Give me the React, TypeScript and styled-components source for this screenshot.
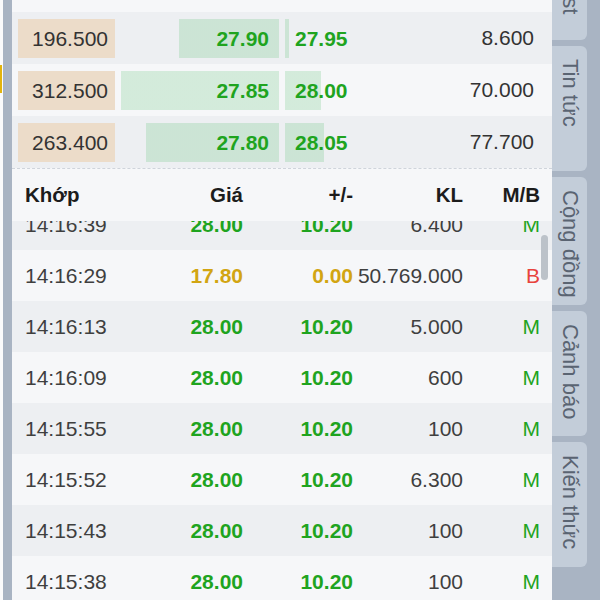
import styled, { createGlobalStyle } from 'styled-components'

const GlobalStyle = createGlobalStyle`
  html, body {
    margin: 0;
    padding: 0;
  }
  body {
    font-family: "Liberation Sans", Arial, sans-serif;
    background: #ffffff;
  }
`

type Tone = 'up' | 'ref' | 'down'

const toneColor: Record<Tone, string> = {
  up: '#1fa41f',
  ref: '#d2a512',
  down: '#e8433d',
}

const book = [
  { vol: '196.500', bid: '27.90', bidW: 100, ask: '27.95', askW: 4, askVol: '8.600' },
  { vol: '312.500', bid: '27.85', bidW: 158, ask: '28.00', askW: 36, askVol: '70.000' },
  { vol: '263.400', bid: '27.80', bidW: 133, ask: '28.05', askW: 39, askVol: '77.700' },
]

const trades: { time: string; price: string; change: string; kl: string; side: string; tone: Tone }[] = [
  { time: '14:16:39', price: '28.00', change: '10.20', kl: '6.400', side: 'M', tone: 'up' },
  { time: '14:16:29', price: '17.80', change: '0.00', kl: '50.769.000', side: 'B', tone: 'ref' },
  { time: '14:16:13', price: '28.00', change: '10.20', kl: '5.000', side: 'M', tone: 'up' },
  { time: '14:16:09', price: '28.00', change: '10.20', kl: '600', side: 'M', tone: 'up' },
  { time: '14:15:55', price: '28.00', change: '10.20', kl: '100', side: 'M', tone: 'up' },
  { time: '14:15:52', price: '28.00', change: '10.20', kl: '6.300', side: 'M', tone: 'up' },
  { time: '14:15:43', price: '28.00', change: '10.20', kl: '100', side: 'M', tone: 'up' },
  { time: '14:15:38', price: '28.00', change: '10.20', kl: '100', side: 'M', tone: 'up' },
]

// first tab is scrolled mostly out of view, only its tail shows
const tabs = [
  { label: 'Watchlist', h: 127, offset: -87 },
  { label: 'Tin tức', h: 125, offset: 0 },
  { label: 'Cộng đồng', h: 128, offset: 0 },
  { label: 'Cảnh báo', h: 125, offset: 0 },
  { label: 'Kiến thức', h: 125, offset: 0 },
]

export default function App() {
  return (
    <>
      <GlobalStyle />
      <Screen>
        <EdgeStrip>
          <EdgeMark />
        </EdgeStrip>
        <Gutter />
        <Panel>
          <Book>
            {book.map((r, i) => (
              <BookRow key={r.vol} $dark={i % 2 === 0}>
                <VolBox>{r.vol}</VolBox>
                <BidCell style={{ backgroundSize: `${r.bidW}px 100%` }}>{r.bid}</BidCell>
                <AskCell style={{ backgroundSize: `${r.askW}px 100%` }}>{r.ask}</AskCell>
                <AskVol>{r.askVol}</AskVol>
              </BookRow>
            ))}
          </Book>
          <HeadRow>
            <HeadCell $left>Khớp</HeadCell>
            <HeadCell>Giá</HeadCell>
            <HeadCell>+/-</HeadCell>
            <HeadCell>KL</HeadCell>
            <HeadCell>M/B</HeadCell>
          </HeadRow>
          <TradeList>
            <TradeScroll>
              {trades.map((t, i) => (
                <TradeRow key={t.time} $dark={i % 2 === 0}>
                  <TimeCell>{t.time}</TimeCell>
                  <PriceCell $tone={t.tone}>{t.price}</PriceCell>
                  <PriceCell $tone={t.tone}>{t.change}</PriceCell>
                  <VolCell>{t.kl}</VolCell>
                  <SideCell $tone={t.side === 'B' ? 'down' : 'up'}>{t.side}</SideCell>
                </TradeRow>
              ))}
            </TradeScroll>
            <ScrollThumb />
          </TradeList>
        </Panel>
        <TabColumn>
          {tabs.map(t => (
            <SideTab key={t.label} $h={t.h} $offset={t.offset}>{t.label}</SideTab>
          ))}
        </TabColumn>
      </Screen>
    </>
  )
}

const Screen = styled.div`
  width: 600px;
  height: 600px;
  overflow: hidden;
  display: flex;
`

const EdgeStrip = styled.div`
  width: 3px;
  flex-shrink: 0;
  background: #fbfbfc;
  padding-top: 65px;
  box-sizing: border-box;
`

const EdgeMark = styled.div`
  width: 2px;
  height: 28px;
  background: #e3b40c;
`

const Gutter = styled.div`
  width: 9px;
  flex-shrink: 0;
  background: #a9b4c3;
`

const Panel = styled.div`
  width: 540px;
  flex-shrink: 0;
  display: flex;
  flex-direction: column;
  background: #f6f7f9;
  overflow: hidden;
`

const Book = styled.div`
  padding-top: 12px;
  border-bottom: 1px dashed #cfd4db;
`

const BookRow = styled.div<{ $dark: boolean }>`
  height: 52px;
  display: flex;
  align-items: center;
  background: ${p => (p.$dark ? '#edeff2' : '#f6f7f9')};
  font-size: 21px;
`

const VolBox = styled.div`
  width: 97px;
  height: 39px;
  margin-left: 6px;
  padding-right: 7px;
  box-sizing: border-box;
  background: #ecdcc9;
  color: #333333;
  line-height: 39px;
  text-align: right;
`

const BidCell = styled.div`
  width: 158px;
  height: 39px;
  margin-left: 6px;
  padding-right: 10px;
  box-sizing: border-box;
  line-height: 39px;
  text-align: right;
  font-weight: bold;
  color: #1fa41f;
  background-image: linear-gradient(rgba(40, 175, 70, 0.17), rgba(40, 175, 70, 0.17));
  background-repeat: no-repeat;
  background-position: right center;
`

const AskCell = styled.div`
  width: 130px;
  height: 39px;
  margin-left: 6px;
  padding-left: 10px;
  box-sizing: border-box;
  line-height: 39px;
  font-weight: bold;
  color: #1fa41f;
  background-image: linear-gradient(rgba(40, 175, 70, 0.17), rgba(40, 175, 70, 0.17));
  background-repeat: no-repeat;
  background-position: left center;
`

const AskVol = styled.div`
  flex: 1;
  padding-right: 18px;
  text-align: right;
  color: #333333;
`

const cols = `
  display: grid;
  grid-template-columns: 138px 80px 110px 110px 77px;
  padding-left: 13px;
  align-items: center;
`

const HeadRow = styled.div`
  ${cols}
  height: 52px;
  flex-shrink: 0;
  background: #f6f7f9;
`

const HeadCell = styled.div<{ $left?: boolean }>`
  font-size: 20.5px;
  font-weight: bold;
  color: #1c1c1c;
  text-align: ${p => (p.$left ? 'left' : 'right')};
`

const TradeList = styled.div`
  flex: 1;
  position: relative;
  overflow: hidden;
`

const TradeScroll = styled.div`
  margin-top: -22px;
`

const TradeRow = styled.div<{ $dark: boolean }>`
  ${cols}
  height: 51px;
  font-size: 21px;
  background: ${p => (p.$dark ? '#edeff2' : '#f6f7f9')};
`

const TimeCell = styled.div`
  color: #3f3f3f;
`

const PriceCell = styled.div<{ $tone: Tone }>`
  text-align: right;
  font-weight: bold;
  color: ${p => toneColor[p.$tone]};
`

const VolCell = styled.div`
  text-align: right;
  color: #3f3f3f;
`

const SideCell = styled.div<{ $tone: Tone }>`
  text-align: right;
  color: ${p => toneColor[p.$tone]};
`

const ScrollThumb = styled.div`
  position: absolute;
  top: 14px;
  right: 4px;
  width: 7px;
  height: 45px;
  border-radius: 4px;
  background: #bcc2c9;
`

const TabColumn = styled.div`
  flex: 1;
  display: flex;
  flex-direction: column;
  gap: 6px;
  background: #a9b4c3;
`

const SideTab = styled.div<{ $h: number; $offset: number }>`
  width: 35px;
  height: ${p => p.$h}px;
  margin-top: ${p => p.$offset}px;
  flex-shrink: 0;
  box-sizing: border-box;
  padding-top: 13px;
  border-radius: 0 6px 6px 0;
  background: #c3cdd9;
  color: #5a6472;
  font-size: 22px;
  writing-mode: vertical-rl;
  display: flex;
  align-items: center;
  white-space: nowrap;
`
